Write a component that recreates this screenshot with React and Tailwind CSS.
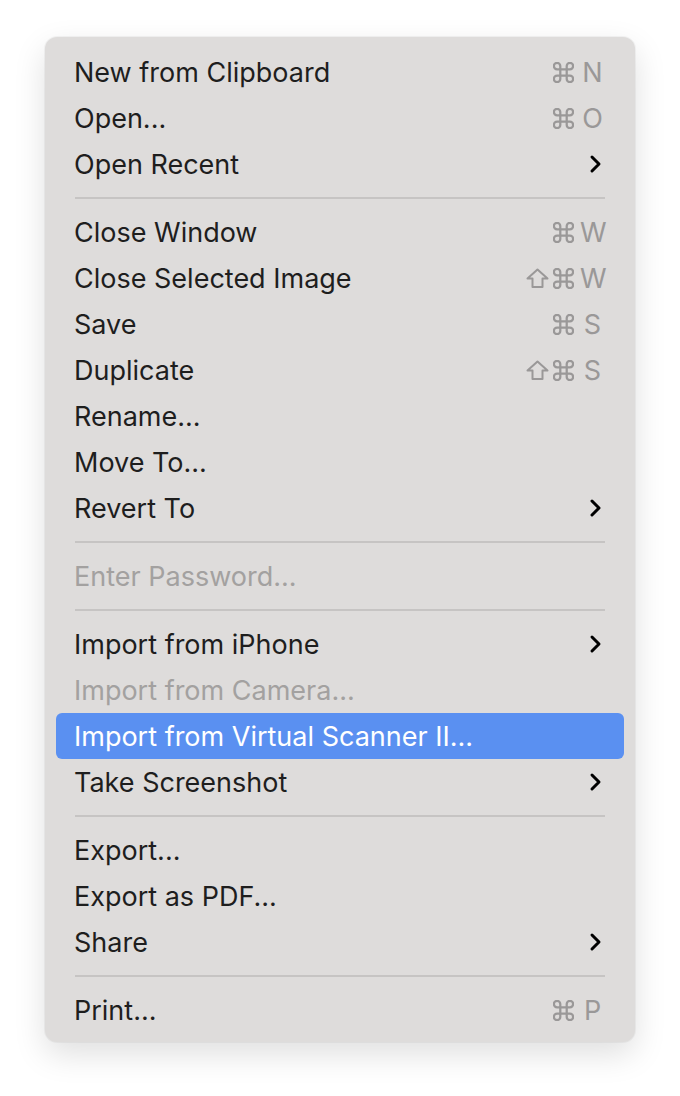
import React from 'react';

const sections = [
  [
    { label: 'New from Clipboard', keys: ['cmd', 'N'] },
    { label: 'Open...', keys: ['cmd', 'O'] },
    { label: 'Open Recent', sub: true },
  ],
  [
    { label: 'Close Window', keys: ['cmd', 'W'] },
    { label: 'Close Selected Image', keys: ['shift', 'cmd', 'W'] },
    { label: 'Save', keys: ['cmd', 'S'] },
    { label: 'Duplicate', keys: ['shift', 'cmd', 'S'] },
    { label: 'Rename...' },
    { label: 'Move To...' },
    { label: 'Revert To', sub: true },
  ],
  [{ label: 'Enter Password...', disabled: true }],
  [
    { label: 'Import from iPhone', sub: true },
    { label: 'Import from Camera...', disabled: true },
    { label: 'Import from Virtual Scanner II...', active: true },
    { label: 'Take Screenshot', sub: true },
  ],
  [
    { label: 'Export...' },
    { label: 'Export as PDF...' },
    { label: 'Share', sub: true },
  ],
  [{ label: 'Print...', keys: ['cmd', 'P'] }],
];

const CmdIcon = () => (
  <svg width="21" height="21" viewBox="2.2 2.2 19.6 19.6" fill="none" stroke="currentColor" strokeWidth="2.1" strokeLinecap="round" strokeLinejoin="round">
    <path d="M15 6v12a3 3 0 1 0 3-3H6a3 3 0 1 0 3 3V6a3 3 0 1 0-3 3h12a3 3 0 1 0-3-3" />
  </svg>
);

const ShiftIcon = () => (
  <svg width="23" height="20" viewBox="0 0 23 20" fill="none" stroke="currentColor" strokeWidth="2" strokeLinejoin="round">
    <path d="M11.5 1.5L21.5 10.5H16.5V19H6.5V10.5H1.5Z" />
  </svg>
);

const Chevron = () => (
  <svg width="14" height="20" viewBox="0 0 14 20" fill="none" stroke="currentColor" strokeWidth="3" strokeLinecap="round" strokeLinejoin="round">
    <path d="M4 3l7 7-7 7" />
  </svg>
);

const Shortcut = ({ keys }) => (
  <div className="flex items-center text-[#9a9898]">
    {keys.map((k, i) =>
      k === 'cmd' ? (
        <span key={i} className="ml-[4px] flex"><CmdIcon /></span>
      ) : k === 'shift' ? (
        <span key={i} className="flex"><ShiftIcon /></span>
      ) : (
        <span key={i} className="ml-[6px] w-[25px] text-center text-[27px]">{k}</span>
      )
    )}
  </div>
);

const Row = ({ item }) => {
  const color = item.active ? 'text-white' : item.disabled ? 'text-[#a3a1a0]' : 'text-[#1e1e1e]';
  return (
    <div className={`h-[46px] flex items-center justify-between pl-[18px] pr-[19px] rounded-[6px] ${item.active ? 'bg-[#5a90f1]' : ''} ${color}`}>
      <span>{item.label}</span>
      {item.keys && <Shortcut keys={item.keys} />}
      {item.sub && <span className="text-black pr-[3px]"><Chevron /></span>}
    </div>
  );
};

const App = () => (
  <div className="min-h-[1096px] bg-white pt-[37px] pl-[45px]" style={{ fontFamily: 'Inter, "Noto Sans", sans-serif' }}>
    <div className="w-[590px] bg-[#dedcdb] rounded-[12px] px-[11px] pt-[12px] pb-[9px] text-[27px] leading-none shadow-[0_12px_32px_rgba(0,0,0,0.13),0_0_0_1px_rgba(0,0,0,0.04)]">
      {sections.map((sec, si) => (
        <div key={si}>
          {si > 0 && (
            <div className="h-[22px] flex items-center px-[19px]">
              <div className="h-[2px] w-full bg-[#c6c4c3]" />
            </div>
          )}
          {sec.map((item) => <Row key={item.label} item={item} />)}
        </div>
      ))}
    </div>
  </div>
);

export default App;
